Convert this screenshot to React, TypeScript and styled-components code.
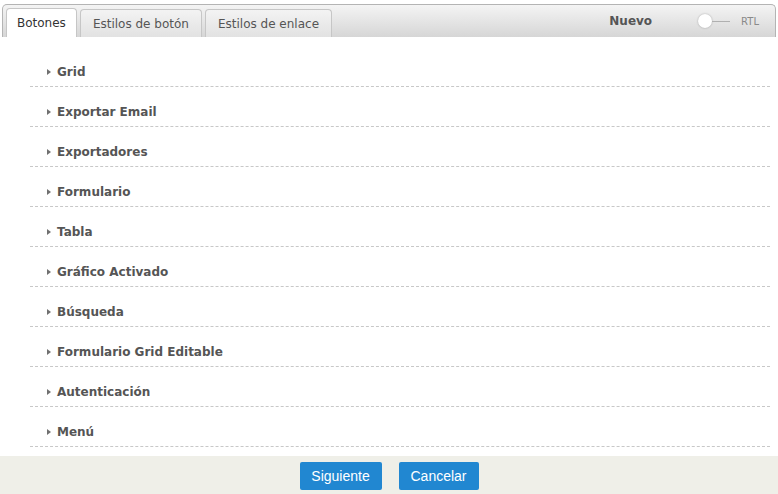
import { FC } from "react";
import styled, { createGlobalStyle } from "styled-components";

const GlobalStyle = createGlobalStyle`
  html, body {
    margin: 0;
    padding: 0;
    background: #ffffff;
  }
  body {
    font-family: "DejaVu Sans", sans-serif;
  }
`;

const Page = styled.div`
  width: 778px;
  height: 494px;
  display: flex;
  flex-direction: column;
  box-sizing: border-box;
  padding-top: 4px;
  overflow: hidden;
`;

const TabBar = styled.div`
  margin: 0 2px;
  height: 33px;
  box-sizing: border-box;
  border: 1px solid #b4b4b4;
  border-bottom: none;
  border-radius: 5px 5px 0 0;
  background: linear-gradient(#f4f4f4, #d6d6d6);
  display: flex;
  align-items: flex-end;
  padding-left: 3px;
`;

const Tab = styled.div<{ $active?: boolean }>`
  box-sizing: border-box;
  margin-right: 3px;
  padding: 0 ${(p) => (p.$active ? "10px" : "12px")};
  display: flex;
  align-items: center;
  border: 1px solid #c6c6c6;
  border-bottom: none;
  border-radius: 4px 4px 0 0;
  font-size: 12px;
  color: ${(p) => (p.$active ? "#333333" : "#555555")};
  background: ${(p) => (p.$active ? "#ffffff" : "linear-gradient(#f3f3f3, #e2e2e2)")};
  height: ${(p) => (p.$active ? "29px" : "28px")};
`;

const BarRight = styled.div`
  margin-left: auto;
  align-self: center;
  display: flex;
  align-items: center;
  padding-right: 16px;
`;

const NewLabel = styled.span`
  font-weight: bold;
  font-size: 12px;
  color: #555555;
  margin-right: 46px;
`;

const Toggle = styled.div`
  display: flex;
  align-items: center;
  margin-right: 11px;
`;

const Knob = styled.div`
  width: 14px;
  height: 14px;
  border-radius: 50%;
  background: #ffffff;
  box-shadow: 0 0 2px rgba(0, 0, 0, 0.3);
`;

const Track = styled.div`
  width: 18px;
  height: 1px;
  background: #b0b0b0;
`;

const RtlLabel = styled.span`
  font-size: 10px;
  color: #8a8a8a;
`;

const List = styled.div`
  margin: 10px 8px 0 30px;
`;

const Row = styled.div`
  height: 40px;
  box-sizing: border-box;
  border-bottom: 1px dashed #c8c8c8;
  padding-top: 18px;
  display: flex;
  align-items: flex-start;
  padding-left: 17px;
`;

const Arrow = styled.span`
  width: 0;
  height: 0;
  margin-top: 4px;
  margin-right: 6px;
  border-top: 3.5px solid transparent;
  border-bottom: 3.5px solid transparent;
  border-left: 4px solid #707070;
`;

const RowLabel = styled.span`
  font-weight: bold;
  font-size: 12px;
  line-height: 15px;
  color: #555555;
`;

const Footer = styled.div`
  margin-top: auto;
  height: 38px;
  background: #efefe8;
  display: flex;
  justify-content: center;
  align-items: flex-start;
  padding-top: 6px;
  box-sizing: border-box;
  gap: 17px;
`;

const Button = styled.button<{ $width: number }>`
  width: ${(p) => p.$width}px;
  height: 28px;
  border: none;
  border-radius: 2px;
  background: #2187d1;
  color: #ffffff;
  font-family: "Liberation Sans", Arial, sans-serif;
  font-size: 14px;
  padding: 0;
  cursor: pointer;
`;

const items = [
  "Grid",
  "Exportar Email",
  "Exportadores",
  "Formulario",
  "Tabla",
  "Gráfico Activado",
  "Búsqueda",
  "Formulario Grid Editable",
  "Autenticación",
  "Menú",
];

const App: FC = () => {
  return (
    <Page>
      <GlobalStyle />
      <TabBar>
        <Tab $active>Botones</Tab>
        <Tab>Estilos de botón</Tab>
        <Tab>Estilos de enlace</Tab>
        <BarRight>
          <NewLabel>Nuevo</NewLabel>
          <Toggle>
            <Knob />
            <Track />
          </Toggle>
          <RtlLabel>RTL</RtlLabel>
        </BarRight>
      </TabBar>
      <List>
        {items.map((item) => (
          <Row key={item}>
            <Arrow />
            <RowLabel>{item}</RowLabel>
          </Row>
        ))}
      </List>
      <Footer>
        <Button $width={82}>Siguiente</Button>
        <Button $width={80}>Cancelar</Button>
      </Footer>
    </Page>
  );
};

export default App;
